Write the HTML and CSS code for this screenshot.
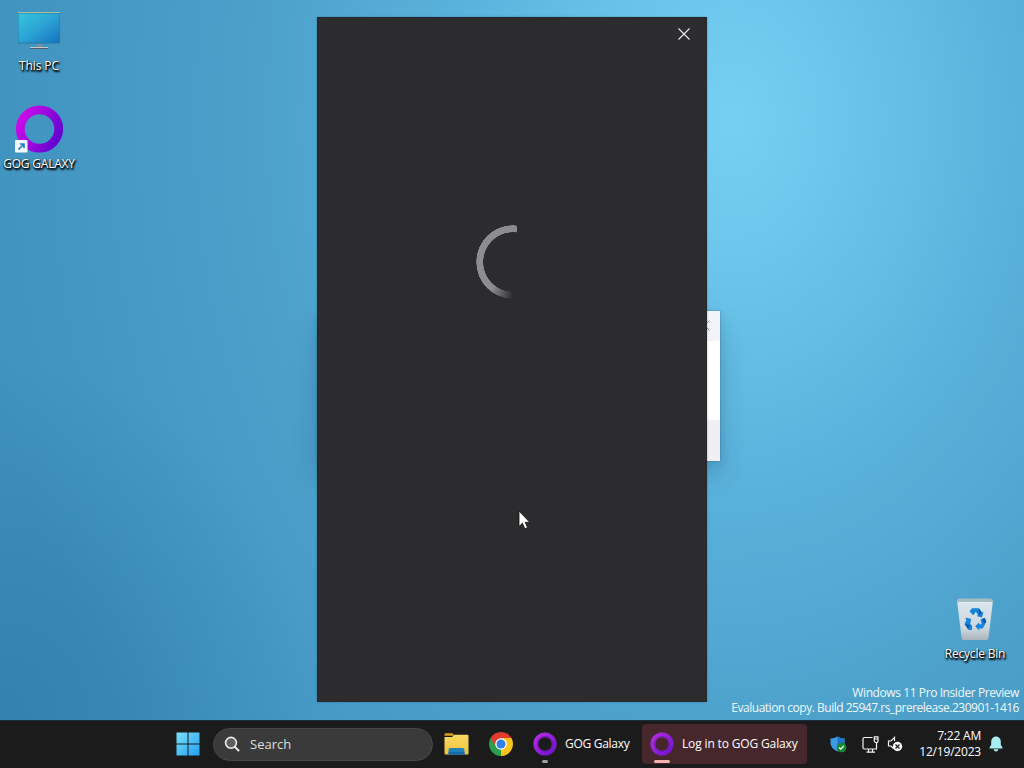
FILE: index.html
```
<!DOCTYPE html>
<html lang="en">
<head>
<meta charset="utf-8">
<title>Desktop</title>
<link rel="stylesheet" href="styles.css">
</head>
<body>
<svg class="defs" width="0" height="0" aria-hidden="true">
  <defs>
    <linearGradient id="ring" x1="0" y1="0.25" x2="1" y2="0.75"><stop offset="0" stop-color="#c80be8"/><stop offset="0.5" stop-color="#9a08dc"/><stop offset="1" stop-color="#6205cf"/></linearGradient>
    <linearGradient id="ringSmall" x1="0" y1="0" x2="1" y2="1"><stop offset="0" stop-color="#b52be0"/><stop offset="1" stop-color="#7212d0"/></linearGradient>
    <linearGradient id="screen" x1="0" y1="0" x2="1" y2="1"><stop offset="0" stop-color="#35c5dc"/><stop offset="0.5" stop-color="#2ba3d5"/><stop offset="1" stop-color="#1673bd"/></linearGradient>
    <linearGradient id="win" gradientUnits="userSpaceOnUse" x1="0" y1="0" x2="24" y2="24"><stop offset="0" stop-color="#7be2fb"/><stop offset="1" stop-color="#1f9df0"/></linearGradient>
    <linearGradient id="folder" x1="0" y1="0" x2="0" y2="1"><stop offset="0" stop-color="#f8d965"/><stop offset="1" stop-color="#f0c337"/></linearGradient>
    <linearGradient id="bin" x1="0" y1="0" x2="0" y2="1"><stop offset="0" stop-color="#dbe6ed"/><stop offset="0.7" stop-color="#cdd7de"/><stop offset="1" stop-color="#a9b4bb"/></linearGradient>
  </defs>
</svg>
<div class="desktop">
  <main class="wallpaper">
    <div class="shortcut this-pc">
      <svg width="48" height="48" viewBox="0 0 48 48">
        <rect x="3" y="4.500" width="42" height="31" rx="1" fill="#247aa1"/>
        <rect x="3.500" y="5.500" width="41" height="29" fill="url(#screen)"/>
        <path d="M3 4.500h42" stroke="#a7bfa5"/>
        <path d="M22 36h5v4h-5z" fill="#8b8c91"/>
        <path d="M15 39.500h18" stroke="#c3c8cc"/><path d="M15 40.500h18" stroke="#515f69"/>
      </svg>
      <span>This PC</span>
    </div>
    <div class="shortcut galaxy">
      <svg width="48" height="48" viewBox="0 0 48 48">
        <circle cx="24.500" cy="24" r="19.200" fill="none" stroke="url(#ring)" stroke-width="8.800"/>
        <rect x="0" y="35" width="12.500" height="12.500" rx="1" fill="#f4f9fd"/>
        <path d="M3.500 44.500l5-5M4.800 39h4.200v4.200" fill="none" stroke="#1d7ac6" stroke-width="1.600"/>
      </svg>
      <span>GOG GALAXY</span>
    </div>
    <div class="shortcut recycle">
      <svg width="48" height="48" viewBox="0 0 48 48">
        <path d="M6 4.500L42 4.500L37.500 42Q37.300 44 35 44H13Q10.800 44 10.600 42z" fill="url(#bin)"/>
        <path d="M6 4l2-1.500h32L42 4.500v2H6.300z" fill="#a8bac4"/>
        <path d="M7.500 6.500h33" stroke="#e4ecf0"/>
        <g fill="#1684dc">
          <path d="M18.500 15.500l2.500-3.200h7l3 4.200 1.500-.5-1.500 5.500-5.500-1.500 1.600-1-2.300-3.300-2.500 3.600z"/>
          <path d="M14.500 21.500l5.700 1.500-1 5 1.800 1.500v4.500h-3.500L13.500 28l1.800-3.500z"/>
          <path d="M29.500 23.500l4.300-1.500 1.500 4-3.600 6.500h-3.500v2l-4-4.200 4-4v2h2.500z"/>
        </g>
        <path d="M27.500 12.500l3.500 4-2.500 3zM14 28l3 5 2-4zM31 23l2.800-1 1.500 4-2.300 1z" fill="#0855ae"/>
      </svg>
      <span>Recycle Bin</span>
    </div>
    <section class="dialog">
      <header><svg width="11" height="11" viewBox="0 0 11 11"><path d="M.5.5l10 10M10.500.5l-10 10" stroke="#85858a"/></svg></header>
      <div class="dialog-body"></div>
      <footer></footer>
    </section>
    <section class="login">
      <button class="close" aria-label="Close"><svg width="12" height="12" viewBox="0 0 12 12"><path d="M.5.5l11 11M11.500.5l-11 11" stroke="#ededed" stroke-width="1.100"/></svg></button>
      <div class="spinner"><i></i></div>
    </section>
    <div class="watermark"><div class="edition">Windows 11 Pro Insider Preview</div><div class="build">Evaluation copy. Build 25947.rs_prerelease.230901-1416</div></div>
    <svg class="cursor" width="14" height="21" viewBox="0 0 14 21"><path d="M1 1v15.500l3.400-3.300 2.500 5.600 2.600-1.200-2.300-5.300h4.500z" fill="#fff" stroke="#111" stroke-width=".8"/></svg>
  </main>
  <nav class="taskbar">
    <svg class="start" width="24" height="24" viewBox="0 0 24 24"><path d="M.5.500h11v11H.5zM12.500.500h11v11h-11zM.5 12.500h11v11H.5zM12.500 12.500h11v11h-11z" fill="url(#win)"/></svg>
    <div class="search">
      <svg width="16" height="16" viewBox="0 0 16 16"><circle cx="7" cy="6.800" r="5.400" fill="#5d5d5d" stroke="#ececec" stroke-width="1.600"/><path d="M11 11l3.500 3.500" stroke="#ececec" stroke-width="1.900" stroke-linecap="round"/></svg>
      <span>Search</span>
    </div>
    <svg class="folder" width="25" height="24" viewBox="0 0 25 24">
      <path d="M.5 2.500Q.5 1.300 2 1.300h6.500l2.500 2.500H.5z" fill="#d99d21"/>
      <path d="M.5 5H8l2.500-2.200H23.500Q24.500 2.800 24.500 4V21.500Q24.500 22.500 23.500 22.500H1.500Q.5 22.500.5 21.500z" fill="url(#folder)"/>
      <path d="M4.500 22.500v-4.500Q4.500 16 6.500 16h12Q20.500 16 20.500 18v4.500z" fill="#2382bd"/><path d="M4.500 22.500v-2.500h16v2.500z" fill="#1469a9"/>
    </svg>
    <svg class="chrome" width="24" height="24" viewBox="0 0 24 24">
      <path d="M12 12L1.610 6A12 12 0 0 1 22.390 6z" fill="#e33b2e"/>
      <path d="M12 12L22.390 6A12 12 0 0 1 12 24z" fill="#fbc51b"/>
      <path d="M12 12V24A12 12 0 0 1 1.610 6z" fill="#2b9f4b"/>
      <path d="M12 6H22.390L17.200 15z" fill="#fbc51b"/><path d="M6.800 15L1.610 6 12 6z" fill="#e33b2e"/>
      <path d="M1.610 6L6.800 15 12 18 6 21z" fill="#2b9f4b"/><path d="M17.200 15L12 24 12 18z" fill="#fbc51b"/>
      <circle cx="12" cy="12" r="5.800" fill="#fff"/><circle cx="12" cy="12" r="4.500" fill="#2f7fe8"/>
    </svg>
    <div class="task">
      <svg width="24" height="24" viewBox="0 0 24 24"><circle cx="12" cy="12" r="9.200" fill="none" stroke="url(#ringSmall)" stroke-width="4.800"/><circle cx="12" cy="12" r="7.500" fill="none" stroke="#6417a8" stroke-width=".9"/></svg>
      <span>GOG Galaxy</span><i class="indicator"></i>
    </div>
    <div class="task active">
      <svg width="24" height="24" viewBox="0 0 24 24"><circle cx="12" cy="12" r="9.200" fill="none" stroke="url(#ringSmall)" stroke-width="4.800"/><circle cx="12" cy="12" r="7.500" fill="none" stroke="#6d20ae" stroke-width=".9"/></svg>
      <span>Log in to GOG Galaxy</span><i class="indicator"></i>
    </div>
    <div class="tray">
      <svg class="shield" width="17" height="17" viewBox="0 0 17 17"><path d="M.5 2.500Q4.500 2.500 7.500.4 10.500 2.500 14.500 2.500V7Q14.500 12 7.500 15.500.5 12 .5 7z" fill="#3a9be4"/><path d="M7.500.4Q10.500 2.500 14.500 2.500V7Q14.500 12 7.500 15.500z" fill="#1c75c8"/><circle cx="11.500" cy="11.500" r="4.800" fill="#138a32"/><path d="M9 11.500l1.800 1.700 3-3.300" fill="none" stroke="#fff" stroke-width="1.200"/></svg>
      <svg class="network" width="17" height="17" viewBox="0 0 17 17" fill="none" stroke="#f4f4f4" stroke-width="1.200"><path d="M10.500 1.500H2.500Q1 1.500 1 3v8.500Q1 13 2.500 13H14.500V7M4.500 16.200h8.500M6.500 13v3M10.500 13v3M12.300.8h3.700v4.500Q16 6.500 14.200 6.500 12.300 6.500 12.300 5.300zM12.500 3H16"/></svg>
      <svg class="volume" width="16" height="16" viewBox="0 0 16 16"><path d="M7.500 5V1.500L4 5H1.500v5H4l2.500 2.500" fill="none" stroke="#f4f4f4" stroke-width="1.200"/><circle cx="10.500" cy="10.500" r="4.700" fill="#f7f7f7"/><path d="M8.500 8.500l4 4M12.500 8.500l-4 4" stroke="#222" stroke-width="1.300"/></svg>
    </div>
    <div class="clock"><div class="time">7:22 AM</div><div class="date">12/19/2023</div></div>
    <svg class="bell" width="14" height="16" viewBox="0 0 14 16"><path d="M7 .5a4.800 4.800 0 0 0-4.800 4.800v3.400L.5 11.500Q.3 12.500 1 12.500h12q.7 0 .5-1l-1.700-2.800V5.300A4.800 4.800 0 0 0 7 .5zM4.500 13.200h5Q9 15.500 7 15.500t-2.500-2.300z" fill="#a7eef0"/></svg>
  </nav>
</div>
</body>
</html>
```
FILE: styles.css
```
* { box-sizing: border-box; }
body { margin: 0; overflow: hidden; color: #fff; font: 12px/16px "Open Sans", "Noto Sans", sans-serif; }
.defs { position: absolute; }
svg { display: block; flex: none; }
.desktop { width: 1024px; height: 768px; display: grid; grid-template-rows: 720px 48px; }
.wallpaper {
  position: relative; overflow: hidden;
  background:
    radial-gradient(ellipse 320px 360px at 0 100%, rgba(24, 96, 145, .35), transparent),
    radial-gradient(ellipse 760px 1000px at 730px 120px, #76d0f4 0, #6dc7ec 13%, #5ab3dc 36%, #4b9fc9 65%, #4092bf 100%);
}
.shortcut { position: absolute; width: 84px; display: flex; flex-direction: column; align-items: center; text-shadow: 1px 1px 2px #000, 1px 2px 2px #000, 0 1px 2px rgba(0, 0, 0, .75); white-space: nowrap; }
.shortcut span { line-height: 18px; }
.this-pc { left: -3px; top: 8px; letter-spacing: -.1px; }
.this-pc span { margin-top: 1px; }
.galaxy { left: -3px; top: 105px; letter-spacing: -.2px; }
.galaxy span { margin-top: 2px; }
.recycle { left: 933px; top: 596px; letter-spacing: -.2px; }
.recycle span { margin-top: 1px; }
.dialog { position: absolute; left: 319px; top: 311px; width: 401px; height: 150px; display: flex; flex-direction: column; background: #fff; box-shadow: 0 0 1px #36566a, 0 14px 26px rgba(0, 35, 65, .2), 0 2px 8px rgba(0, 35, 65, .12); }
.dialog header { height: 30px; padding: 9px 10px; display: flex; justify-content: flex-end; background: #f3f4fa; }
.dialog-body { flex: 1; }
.dialog footer { height: 41px; background: #f0f0f4; }
.login { position: absolute; left: 317px; top: 17px; width: 390px; height: 685px; display: flex; flex-direction: column; background: #2c2c2e; border: 1px solid #28292b; box-shadow: 0 0 2px rgba(10, 50, 80, .35); }
.close { align-self: flex-end; display: flex; margin: 10px 16px 0 0; padding: 0; border: 0; background: none; }
.spinner { position: relative; width: 74px; height: 74px; margin: 185px 0 0 158px; border-radius: 50%; background: conic-gradient(from 180deg, transparent 0, #8d8d8f 38deg, #8d8d8f 184deg, transparent 185deg); -webkit-mask: radial-gradient(circle, transparent 29.500px, #000 30px, #000 36.500px, transparent 37px); mask: radial-gradient(circle, transparent 29.500px, #000 30px, #000 36.500px, transparent 37px); }
.spinner i { position: absolute; left: 34px; top: 0; width: 7px; height: 8px; border-radius: 2px; background: #8d8d8f; }
.watermark { position: absolute; right: 5px; bottom: 5px; display: flex; flex-direction: column; align-items: flex-end; line-height: 15px; white-space: nowrap; color: #eef8fc; }
.edition { letter-spacing: -.41px; }
.build { letter-spacing: -.49px; }
.cursor { position: absolute; left: 518px; top: 510px; }
.taskbar { display: flex; align-items: center; padding: 0 0 1px 176px; border-top: 1px solid #152e3b; background: #1b1b1c; white-space: nowrap; }
.search { width: 220px; height: 33px; margin-left: 13px; padding-left: 10px; display: flex; align-items: center; gap: 10px; border: 1px solid #484848; border-radius: 17px; background: #3a3a3a; color: #dedede; font-size: 13px; }
.folder { margin-left: 11px; }
.chrome { margin-left: 20px; }
.task { position: relative; height: 40px; display: flex; align-items: center; }
.task:not(.active) { width: 110px; margin-left: 12px; padding-left: 8px; gap: 8px; }
.task span { letter-spacing: -.15px; }
.task:not(.active) span { letter-spacing: -.28px; }
.active { width: 165px; margin-left: 7px; padding-left: 8px; gap: 8px; background: #46272c; border-radius: 4px; }
.indicator { position: absolute; left: 17px; bottom: 1px; width: 6px; height: 3px; border-radius: 2px; background: #a1a1a1; }
.active .indicator { left: 12px; width: 16px; background: #f4b3ae; }
.tray { display: flex; align-items: center; margin-left: 23px; }
.network { margin-left: 15px; }
.volume { margin-left: 8px; }
.clock { width: 66px; margin-left: 12px; text-align: right; }
.clock div { line-height: 16px; }
.time { letter-spacing: -.2px; }
.date { letter-spacing: -.2px; }
.bell { margin-left: 8px; }
```
